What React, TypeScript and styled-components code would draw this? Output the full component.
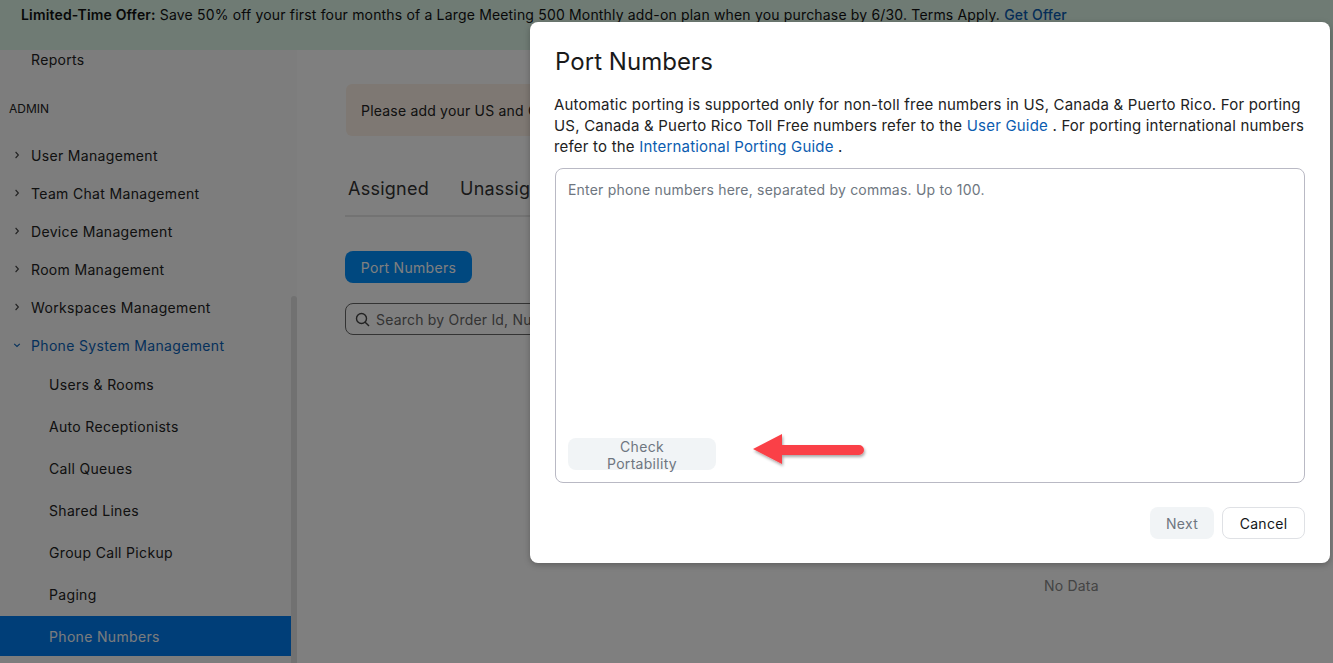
import React from "react";
import styled, { createGlobalStyle } from "styled-components";

const Global = createGlobalStyle`
  html, body { margin: 0; padding: 0; height: 100%; overflow: hidden; background: #fff; }
  body { font-family: Inter, "Liberation Sans", sans-serif; color: #222; font-size: 14px; letter-spacing: 0.2px; }
  #root { height: 100%; }
  * { box-sizing: border-box; }
`;

const Page = styled.div`
  position: relative;
  width: 1333px;
  height: 663px;
  display: flex;
  flex-direction: column;
  overflow: hidden;
  background: #fff;
`;

const Banner = styled.div`
  flex: 0 0 50px;
  background: #def6e9;
  padding: 6px 21px 0;
  font-size: 14px;
  line-height: 17px;
  letter-spacing: 0.17px;
  color: #111;
  white-space: nowrap;
  b { font-weight: 600; }
  a { color: #0b5cb0; font-weight: 500; }
`;

const Body = styled.div`
  flex: 1;
  display: flex;
  min-height: 0;
`;

const Sidebar = styled.nav`
  position: relative;
  flex: 0 0 297px;
  background-color: #fafafa;
  overflow: hidden;
  padding-right: 6px;
  letter-spacing: 0.33px;
`;

const Scrollbar = styled.div`
  position: absolute;
  right: 0;
  top: 246px;
  bottom: 0;
  width: 6px;
  background: #e2e2e2;
  border-radius: 3px 3px 0 0;
`;

const Item = styled.div<{ $open?: boolean }>`
  height: 38px;
  display: flex;
  align-items: center;
  padding-left: 31px;
  position: relative;
  font-size: 14px;
  color: ${(p) => (p.$open ? "#0b62b8" : "#222")};
  svg { position: absolute; left: 11px; top: 13px; color: ${(p) => (p.$open ? "#0b62b8" : "#444")}; }
`;

const ReportsItem = styled(Item)`
  margin-top: -10px;
`;

const Section = styled.div`
  height: 38px;
  margin-top: 11px;
  margin-bottom: 9px;
  padding-left: 9px;
  display: flex;
  align-items: center;
  font-size: 12px;
  letter-spacing: 0;
  color: #222;
`;

const SubItem = styled.div<{ $active?: boolean }>`
  height: 40px;
  margin-bottom: 2px;
  padding-left: 49px;
  display: flex;
  align-items: center;
  font-size: 14px;
  background: ${(p) => (p.$active ? "#007cf0" : "transparent")};
  color: ${(p) => (p.$active ? "#f4f8fc" : "#222")};
`;

const SubList = styled.div`
  padding-top: 0;
`;

const Main = styled.main`
  flex: 1;
  padding: 34px 0 0 49px;
  min-width: 0;
  position: relative;
  display: flex;
  flex-direction: column;
  align-items: flex-start;
`;

const Alert = styled.div`
  width: 940px;
  height: 52px;
  flex: none;
  background: #fdf1e7;
  border-radius: 6px;
  padding: 0 15px;
  display: flex;
  align-items: center;
  font-size: 14px;
  color: #222;
`;

const Tabs = styled.div`
  margin-top: 31px;
  margin-left: -1px;
  width: 940px;
  height: 50px;
  flex: none;
  display: flex;
  gap: 31px;
  padding: 10px 0 0 3px;
  border-bottom: 2px solid #e6e6e6;
  font-size: 18px;
  line-height: 24px;
  letter-spacing: 0.25px;
  color: #333;
`;

const PrimaryButton = styled.button`
  margin-top: 34px;
  margin-left: -1px;
  height: 32px;
  width: 127px;
  flex: none;
  border: 0;
  border-radius: 8px;
  background-color: #0090ff;
  color: #fff;
  font: 400 14px Inter, "Liberation Sans", sans-serif;
  letter-spacing: 0.3px;
`;

const Search = styled.div`
  margin-top: 20px;
  margin-left: -1px;
  width: 300px;
  height: 32px;
  flex: none;
  border: 1px solid #666;
  border-radius: 8px;
  padding-left: 9px;
  display: flex;
  align-items: center;
  gap: 6px;
  font-size: 14px;
  color: #666;
  white-space: nowrap;
`;

const Empty = styled.div`
  position: absolute;
  left: 747px;
  top: 527px;
  font-size: 14px;
  color: #888;
`;

const Backdrop = styled.div`
  position: absolute;
  inset: 0;
  background: rgba(0, 0, 0, 0.5);
`;

const Modal = styled.div`
  position: absolute;
  left: 530px;
  top: 22px;
  width: 800px;
  height: 541px;
  background: #fff;
  border-radius: 8px;
  box-shadow: 0 2px 6px rgba(0, 0, 0, 0.25);
  padding: 24px 25px 24px 25px;
  display: flex;
  flex-direction: column;
`;

const Title = styled.h2`
  margin: 0;
  height: 32px;
  font-size: 24px;
  line-height: 32px;
  font-weight: 400;
  letter-spacing: 0.05px;
  color: #1a1a1a;
`;

const Description = styled.p`
  margin: 16px 0 0 -1px;
  font-size: 15px;
  line-height: 21px;
  letter-spacing: 0.2px;
  color: #222;
  a { color: #0b5cb0; }
`;

const NumberBox = styled.div`
  margin-top: 11px;
  height: 315px;
  flex: none;
  border: 1px solid #b9b9c4;
  border-radius: 8px;
  padding: 12px;
  display: flex;
  flex-direction: column;
  justify-content: space-between;
`;

const Placeholder = styled.div`
  font-size: 14px;
  line-height: 18px;
  color: #6e7680;
`;

const MutedButton = styled.button`
  height: 32px;
  border: 0;
  border-radius: 8px;
  background: #f1f4f6;
  color: #6e7680;
  font: 400 14px Inter, "Liberation Sans", sans-serif;
  letter-spacing: 0.3px;
  padding: 0 16px;
`;

const CheckButton = styled(MutedButton)`
  align-self: flex-start;
  width: 148px;
`;

const Footer = styled.div`
  margin-top: 24px;
  display: flex;
  justify-content: flex-end;
  gap: 8px;
`;

const NextButton = styled(MutedButton)`
  width: 64px;
`;

const CancelButton = styled.button`
  height: 32px;
  width: 83px;
  background: #fff;
  border: 1px solid #dfe1e5;
  border-radius: 8px;
  color: #131619;
  font: 400 14px Inter, "Liberation Sans", sans-serif;
  letter-spacing: 0.3px;
`;

const Arrow = styled.svg`
  position: absolute;
  left: 748px;
  top: 428px;
  overflow: visible;
`;

const Chevron = ({ down }: { down?: boolean }) => (
  <svg width="12" height="12" viewBox="0 0 12 12" fill="none" stroke="currentColor" strokeWidth="1.1">
    {down ? <path d="M3.2 4.8 6 7.4l2.8-2.6" /> : <path d="M4.6 3 7.4 6 4.6 9" />}
  </svg>
);

const SearchIcon = () => (
  <svg width="15" height="15" viewBox="0 0 15 15" fill="none" stroke="#444" strokeWidth="1.4">
    <circle cx="6.5" cy="6.5" r="5" />
    <path d="M10.2 10.2 14 14" />
  </svg>
);

const management = [
  "User Management",
  "Team Chat Management",
  "Device Management",
  "Room Management",
  "Workspaces Management",
];
const phoneItems = ["Users & Rooms", "Auto Receptionists", "Call Queues", "Shared Lines", "Group Call Pickup", "Paging"];

export default function App() {
  return (
    <Page>
      <Global />
      <Banner>
        <b>Limited-Time Offer:</b> Save 50% off your first four months of a Large Meeting 500 Monthly add-on plan when you
        purchase by 6/30. Terms Apply. <a>Get Offer</a>
      </Banner>
      <Body>
        <Sidebar>
          <ReportsItem>Reports</ReportsItem>
          <Section>ADMIN</Section>
          {management.map((m) => (
            <Item key={m}>
              <Chevron />
              {m}
            </Item>
          ))}
          <Item $open>
            <Chevron down />
            Phone System Management
          </Item>
          <SubList>
            {phoneItems.map((s) => (
              <SubItem key={s}>{s}</SubItem>
            ))}
            <SubItem $active>Phone Numbers</SubItem>
          </SubList>
          <Scrollbar />
        </Sidebar>
        <Main>
          <Alert>Please add your US and Canada emergency address</Alert>
          <Tabs>
            <span>Assigned</span>
            <span>Unassigned</span>
          </Tabs>
          <PrimaryButton>Port Numbers</PrimaryButton>
          <Search>
            <SearchIcon />
            Search by Order Id, Number
          </Search>
          <Empty>No Data</Empty>
        </Main>
      </Body>
      <Backdrop />
      <Modal>
        <Title>Port Numbers</Title>
        <Description>
          Automatic porting is supported only for non-toll free numbers in US, Canada &amp; Puerto Rico. For porting US,
          Canada &amp; Puerto Rico Toll Free numbers refer to the <a>User Guide</a> . For porting international numbers
          refer to the <a>International Porting Guide</a> .
        </Description>
        <NumberBox>
          <Placeholder>Enter phone numbers here, separated by commas. Up to 100.</Placeholder>
          <CheckButton>Check Portability</CheckButton>
        </NumberBox>
        <Footer>
          <NextButton>Next</NextButton>
          <CancelButton>Cancel</CancelButton>
        </Footer>
      </Modal>
      <Arrow width="120" height="44" viewBox="0 0 120 44">
        <defs>
          <filter id="arrowShadow" x="-20%" y="-40%" width="140%" height="200%">
            <feDropShadow dx="1" dy="2" stdDeviation="1.5" floodColor="#000" floodOpacity="0.35" />
          </filter>
        </defs>
        <path d="M5 21 34 6v11h77a5 5 0 0 1 0 10H34v9Z" fill="#fa4146" filter="url(#arrowShadow)" />
      </Arrow>
    </Page>
  );
}
